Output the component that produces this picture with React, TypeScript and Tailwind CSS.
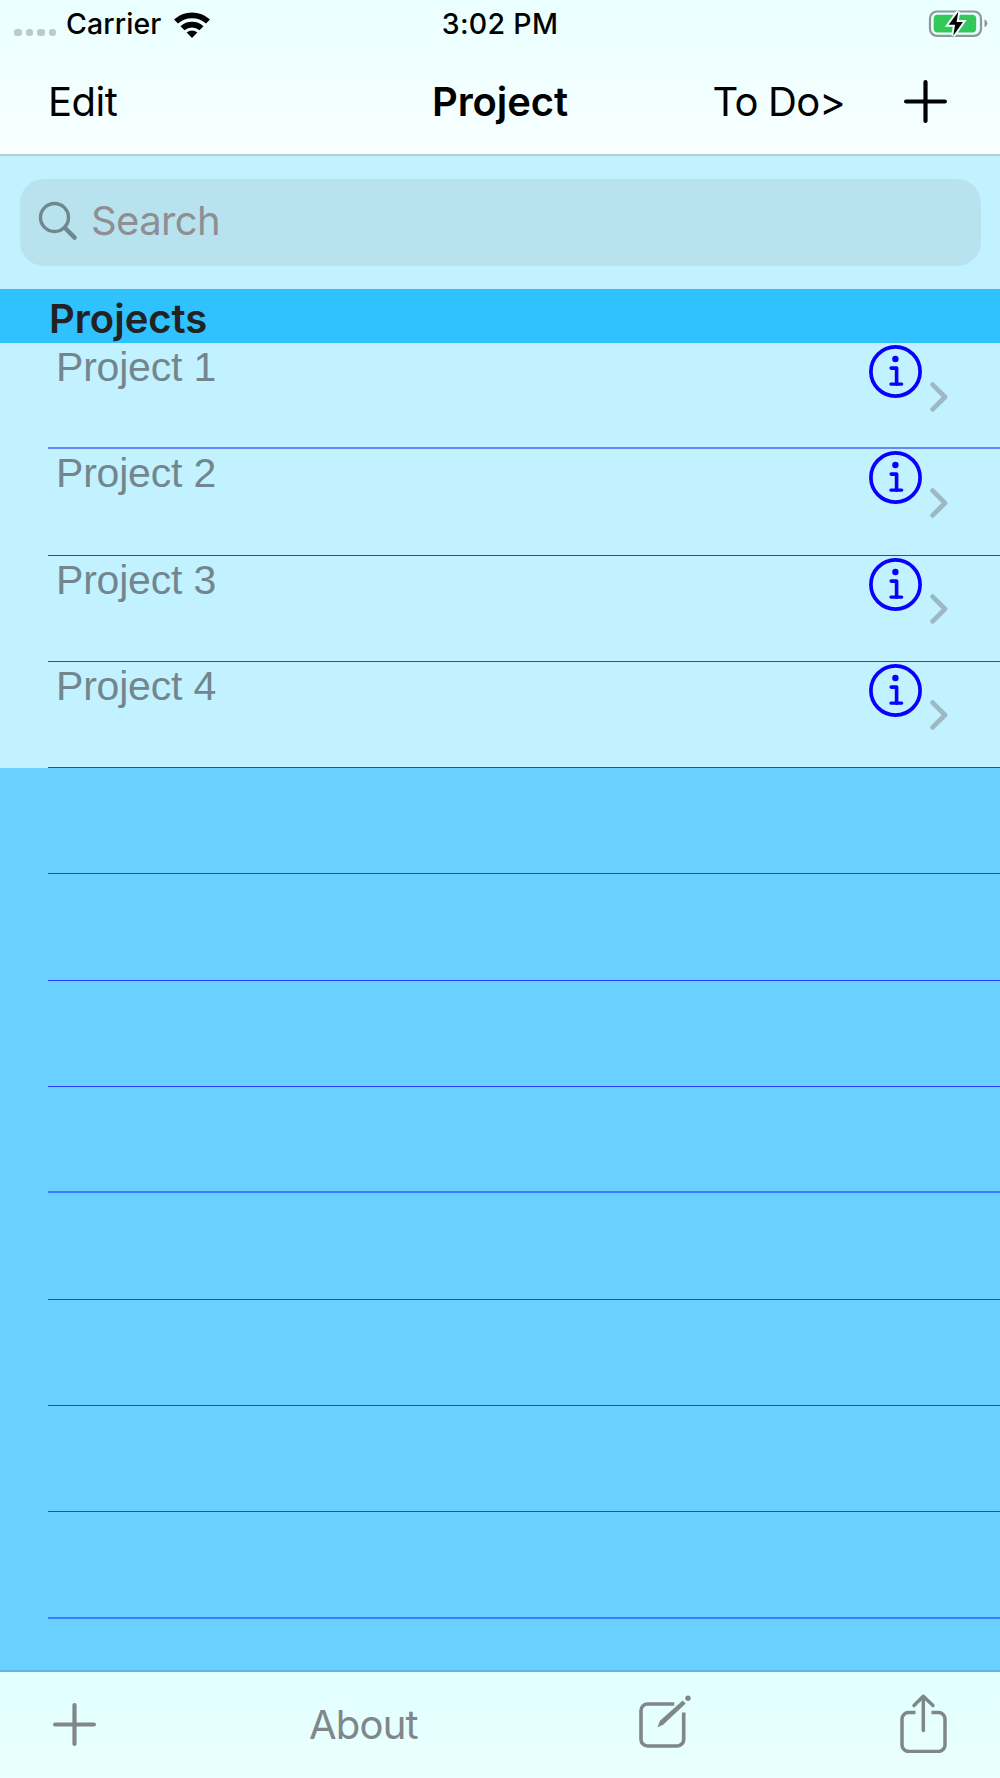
import type { ReactNode } from 'react';

const projects = ['Project 1', 'Project 2', 'Project 3', 'Project 4'];
const emptyRows = 8;

function StatusBar() {
  return (
    <div className="grid h-12 grid-cols-3 items-center text-[28.5px] leading-none font-medium">
      <div className="flex items-center pl-[14px]">
        <div className="mt-[17px] flex gap-1">
          {[0, 1, 2, 3].map((dot) => (
            <span key={dot} className="size-[7.5px] rounded-[3px] bg-[#bccaca]" />
          ))}
        </div>
        <span className="ml-[10px] tracking-[0.1px]">Carrier</span>
        <svg className="ml-[11px] h-[27px] w-[38px]" viewBox="0 0 38 27">
          <path d="M1 8.5a26.5 26.5 0 0 1 36 0l-4 4a21 21 0 0 0-28 0z" />
          <path d="M7.5 15.2a17 17 0 0 1 23 0l-4 4a11.500 11.500 0 0 0-15 0z" />
          <path d="M13.7 21.6a8 8 0 0 1 10.6 0L19 27z" />
        </svg>
      </div>
      <div className="text-center tracking-[0.3px]">3:02 PM</div>
      <div className="flex justify-end pr-[12px]">
        <svg className="h-[28px] w-[60px]" viewBox="0 0 60 28">
          <rect x="2" y="1.5" width="51" height="24.4" rx="7" fill="none" stroke="#8b9899" strokeWidth="2.2" />
          <rect x="5.7" y="4.8" width="42.500" height="17.6" rx="4" fill="#34c759" />
          <path d="M56.5 9.500c3.8 1.4 3.8 6.2 0 7.600z" fill="#8b9899" />
          <path
            d="M30.300 1.700 20.700 14.800H27l-1.700 10.900L34.900 12h-6.300z"
            fill="#000"
            stroke="#f0ffff"
            strokeWidth="4"
            paintOrder="stroke"
          />
        </svg>
      </div>
    </div>
  );
}

function PlusIcon() {
  return (
    <svg className="size-[43px]" viewBox="0 0 43 43" fill="none" stroke="currentColor" strokeWidth="4.2" strokeLinecap="round">
      <path d="M21.5 2.1v38.8M2.1 21.5h38.8" />
    </svg>
  );
}

function NavBar() {
  return (
    <div className="grid h-[107px] grid-cols-[400px_200px_400px] items-center text-[40px]">
      <div className="pl-[48px] tracking-[-0.5px]">Edit</div>
      <div className="text-center font-semibold tracking-[-0.1px]">Project</div>
      <div className="flex items-center justify-end pr-[53px]">
        <span className="mr-[59px] tracking-[-0.8px]">To Do&gt;</span>
        <PlusIcon />
      </div>
    </div>
  );
}

function SearchBar() {
  return (
    <div className="h-[133px] px-[19.5px] pt-[23px]">
      <div className="flex h-[87px] items-center rounded-[24px] bg-[#b8e3ee] pb-[3px] pl-[18.5px]">
        <svg className="size-[40px]" viewBox="0 0 40 40" fill="none" stroke="#6f8790" strokeLinecap="round">
          <circle cx="16.5" cy="16.5" r="14" strokeWidth="3.4" />
          <path d="M26.8 26.8 36.6 36.6" strokeWidth="4.4" />
        </svg>
        <span className="ml-[13px] text-[40px] tracking-[-0.6px] text-[#8e8e93]">Search</span>
      </div>
    </div>
  );
}

function Row({ soft, children }: { soft?: boolean; children?: ReactNode }) {
  return (
    <div className="flex h-[106.3px] pl-12">
      <div className={soft ? 'flex flex-1 border-b-2 border-[#2540ff]/60' : 'flex flex-1 border-b border-[#2540ff]'}>
        {children}
      </div>
    </div>
  );
}

function ProjectRow({ name, soft }: { name: string; soft?: boolean }) {
  return (
    <Row soft={soft}>
      <span className="flex-1 pl-[8px] font-['Liberation_Sans',sans-serif] text-[41px] leading-[49px] tracking-[-0.2px] text-[#73868e]">
        {name}
      </span>
      <svg className="mt-[2px] size-[53px]" viewBox="0 0 53 53" fill="none" stroke="#0a00ff" strokeLinecap="round" strokeLinejoin="round">
        <circle cx="26.5" cy="26.5" r="24.6" strokeWidth="3.7" />
        <circle cx="26.4" cy="14" r="3.2" fill="#0a00ff" stroke="none" />
        <path d="M22.2 23.100h5.400v16" strokeWidth="3.600" />
        <path d="M21.900 39.100h10.800" strokeWidth="3.200" />
      </svg>
      <svg className="mt-[38.500px] mr-[52.5px] ml-[7.5px] h-[30px] w-[18px]" viewBox="0 0 18 30" fill="none" stroke="#9cb9c3" strokeWidth="4.700" strokeLinecap="round" strokeLinejoin="round">
        <path d="M2.600 2.600 15 15 2.600 27.400" />
      </svg>
    </Row>
  );
}

function Toolbar() {
  return (
    <div className="flex h-[108px] items-start border-t-2 border-[#60b8e2] bg-gradient-to-b from-[#e2ffff] to-[#eaffff] text-[#808789]">
      <div className="mt-[31px] ml-[53px]">
        <PlusIcon />
      </div>
      <span className="mt-[23px] ml-[213px] w-[110px] text-[40px] tracking-[-0.8px] whitespace-nowrap">About</span>
      <svg className="mt-[22px] ml-[219px] size-[54px]" viewBox="0 0 54 54" fill="none">
        <path
          d="M36.200 10H9.500A6.500 6.500 0 0 0 3 16.500v29A6.500 6.500 0 0 0 9.500 52h29.700a6.500 6.500 0 0 0 6.500-6.500V18.500"
          stroke="currentColor"
          strokeWidth="3.600"
        />
        <path d="m19.500 33.500 2.400-6.700L44.700 6.500l3 3-22 20.700z" fill="currentColor" />
        <circle cx="50" cy="4.300" r="2.700" fill="currentColor" />
      </svg>
      <svg className="mt-[21px] ml-[208px] h-[60px] w-[47px]" viewBox="0 0 47 60" fill="none" stroke="currentColor" strokeWidth="3.500" strokeLinecap="round" strokeLinejoin="round">
        <path d="M15.500 19.500H8.500A6.500 6.500 0 0 0 2 26v26a6.500 6.500 0 0 0 6.500 6.500h30A6.500 6.500 0 0 0 45 52V26a6.500 6.500 0 0 0-6.500-6.500H31.500" strokeLinecap="butt" />
        <path d="M23.300 37.500V3.500M14 12.600 23.300 3.300l9.700 9.300" />
      </svg>
    </div>
  );
}

export default function App() {
  return (
    <div className="flex h-[1778px] w-[1000px] flex-col overflow-hidden bg-[#68d1ff] font-['Inter',sans-serif] text-black">
      <header className="h-[156px] border-b-2 border-[#b4cfd5] bg-gradient-to-b from-[#eaffff] to-[#f8ffff]">
        <StatusBar />
        <NavBar />
      </header>
      <main className="flex-1 overflow-hidden">
        <div className="bg-[#c2f2ff]">
          <SearchBar />
          <h2 className="h-[54px] bg-[#30c1ff] pl-[49px] text-[40px] leading-[60px] font-semibold text-[#222]">
            Projects
          </h2>
          {projects.map((name, i) => (
            <ProjectRow key={name} name={name} soft={i === 0} />
          ))}
        </div>
        {Array.from({ length: emptyRows }, (_, i) => (
          <Row key={i} soft={i === 3 || i === 7} />
        ))}
      </main>
      <Toolbar />
    </div>
  );
}
